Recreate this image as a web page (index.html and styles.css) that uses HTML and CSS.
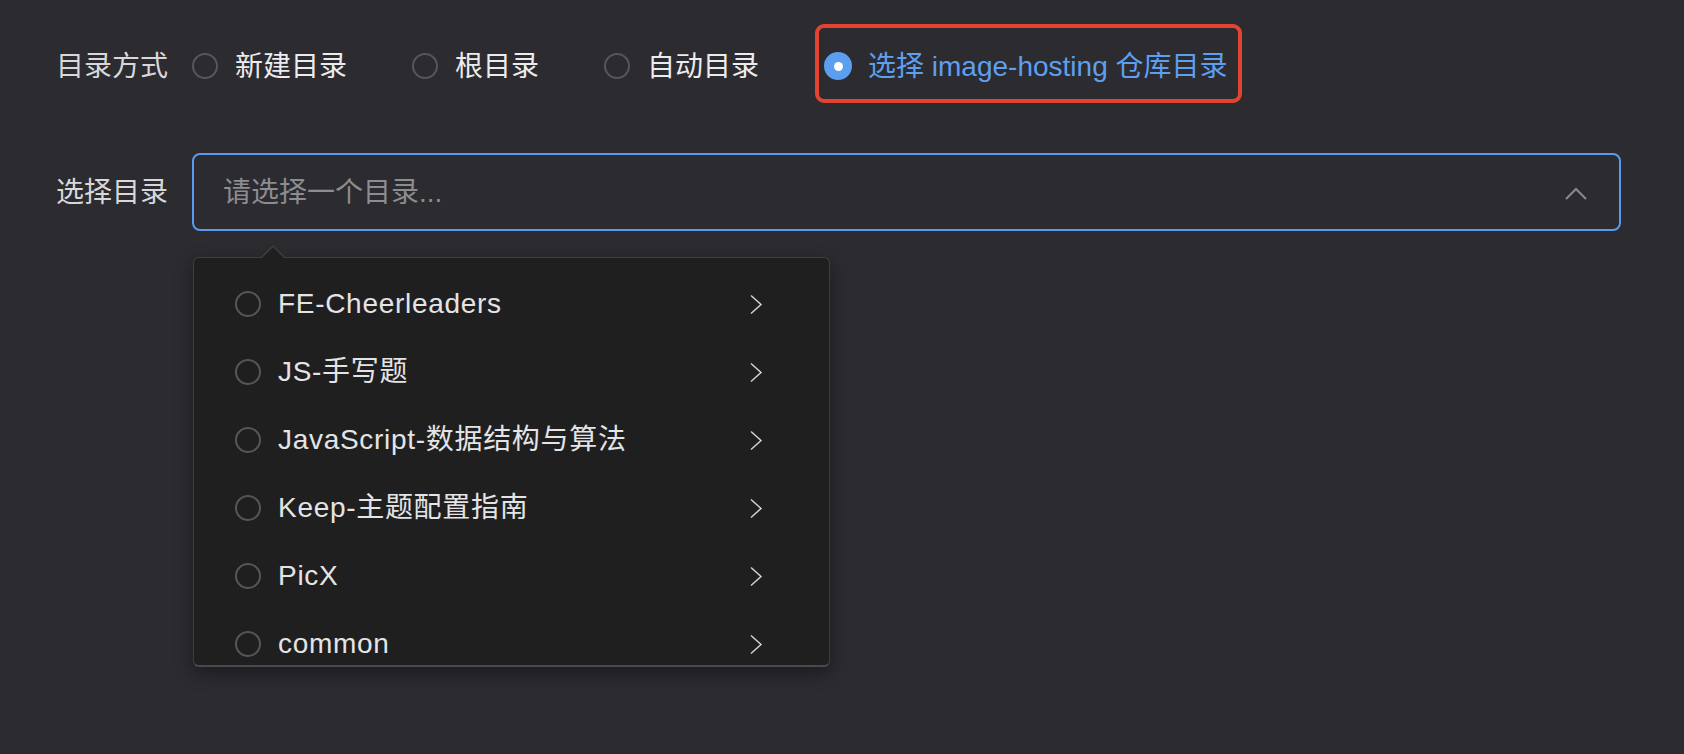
FILE: index.html
```html
<!DOCTYPE html>
<html lang="zh-CN">
<head>
<meta charset="utf-8">
<title>目录方式</title>
<link rel="stylesheet" href="styles.css">
</head>
<body>
<div class="form">
  <div class="row">
    <div class="label">目录方式</div>
    <div class="radios">
      <label class="radio"><span class="dot"></span><span class="rtext">新建目录</span></label>
      <label class="radio"><span class="dot"></span><span class="rtext">根目录</span></label>
      <label class="radio"><span class="dot"></span><span class="rtext">自动目录</span></label>
      <label class="radio checked marked"><span class="dot"></span><span class="rtext">选择 image-hosting 仓库目录</span></label>
    </div>
  </div>
  <div class="row row2">
    <div class="label">选择目录</div>
    <div class="select">
      <div class="input">
        <span class="placeholder">请选择一个目录...</span>
        <svg class="caret" width="22" height="13" viewBox="0 0 22 13"><polyline points="1,12 11,2 21,12" fill="none" stroke="#8a8a8c" stroke-width="2"/></svg>
      </div>
      <div class="dropdown">
        <div class="arrow"></div>
        <div class="panel">
          <ul class="list">
            <li class="item"><span class="dot"></span><span class="itext">FE-Cheerleaders</span><svg class="next" width="14" height="21" viewBox="0 0 14 21"><polyline points="2,1.5 12,10.5 2,19.5" fill="none" stroke="#d2d2d4" stroke-width="1.5"/></svg></li>
            <li class="item"><span class="dot"></span><span class="itext">JS-手写题</span><svg class="next" width="14" height="21" viewBox="0 0 14 21"><polyline points="2,1.5 12,10.5 2,19.5" fill="none" stroke="#d2d2d4" stroke-width="1.5"/></svg></li>
            <li class="item"><span class="dot"></span><span class="itext">JavaScript-数据结构与算法</span><svg class="next" width="14" height="21" viewBox="0 0 14 21"><polyline points="2,1.5 12,10.5 2,19.5" fill="none" stroke="#d2d2d4" stroke-width="1.5"/></svg></li>
            <li class="item"><span class="dot"></span><span class="itext">Keep-主题配置指南</span><svg class="next" width="14" height="21" viewBox="0 0 14 21"><polyline points="2,1.5 12,10.5 2,19.5" fill="none" stroke="#d2d2d4" stroke-width="1.5"/></svg></li>
            <li class="item"><span class="dot"></span><span class="itext">PicX</span><svg class="next" width="14" height="21" viewBox="0 0 14 21"><polyline points="2,1.5 12,10.5 2,19.5" fill="none" stroke="#d2d2d4" stroke-width="1.5"/></svg></li>
            <li class="item"><span class="dot"></span><span class="itext">common</span><svg class="next" width="14" height="21" viewBox="0 0 14 21"><polyline points="2,1.5 12,10.5 2,19.5" fill="none" stroke="#d2d2d4" stroke-width="1.5"/></svg></li>
          </ul>
        </div>
      </div>
    </div>
  </div>
</div>
</body>
</html>
```

FILE: styles.css
```css
html, body {
  margin: 0;
  padding: 0;
  background: #2b2b30;
  height: 100%;
}
body {
  font-family: "Liberation Sans", "Noto Sans CJK SC", sans-serif;
  font-size: 28px;
  color: #e6e6e8;
  overflow: hidden;
}
.form {
  padding: 27px 0 0 56px;
}
.row {
  display: flex;
  align-items: center;
  height: 78px;
}
.row2 {
  margin-top: 48px;
}
.label {
  width: 136px;
  flex: none;
  color: #d8d8da;
  line-height: 30px;
  padding-top: 2px;
}
.radios {
  display: flex;
  align-items: center;
}
.radio {
  display: flex;
  align-items: center;
  margin-right: 65px;
  line-height: 30px;
  position: relative;
}
.dot {
  width: 26px;
  height: 26px;
  box-sizing: border-box;
  border: 2px solid #56565b;
  border-radius: 50%;
  flex: none;
  position: relative;
}
.rtext {
  margin-left: 17px;
  color: #ececee;
  white-space: nowrap;
  padding-top: 2px;
}
.radio.checked .dot {
  width: 28px;
  height: 28px;
  border-color: #5c9ef0;
  background: #5c9ef0;
  margin-right: -1px;
}
.radio.checked .dot::after {
  content: "";
  position: absolute;
  left: 50%;
  top: 50%;
  width: 9px;
  height: 9px;
  margin: -4.5px 0 0 -4.5px;
  border-radius: 50%;
  background: #ffffff;
}
.radio.checked .rtext {
  color: #5e9ff0;
}
.radio.marked::after {
  content: "";
  position: absolute;
  top: -26px;
  bottom: -21px;
  left: -9px;
  right: -15px;
  border: 4px solid #e4432f;
  border-radius: 9px;
  pointer-events: none;
}
.select {
  position: relative;
  width: 1429px;
  height: 78px;
}
.input {
  box-sizing: border-box;
  height: 78px;
  border: 2px solid #5b9aea;
  border-radius: 8px;
  display: flex;
  align-items: center;
  padding: 0 32px 0 29px;
}
.placeholder {
  color: #8c8c91;
  line-height: 30px;
  flex: 1;
  padding-top: 2px;
}
.caret {
  display: block;
  margin-top: 2px;
}
.dropdown {
  position: absolute;
  left: 1px;
  top: 104px;
  width: 637px;
  height: 410px;
  box-shadow: 0 6px 18px rgba(0, 0, 0, 0.35);
  border-radius: 6px;
}
.arrow {
  position: absolute;
  left: 68px;
  top: -12px;
  width: 0;
  height: 0;
  border-left: 12px solid transparent;
  border-right: 12px solid transparent;
  border-bottom: 12px solid #3e3e41;
}
.arrow::after {
  content: "";
  position: absolute;
  left: -11px;
  top: 1.5px;
  border-left: 11px solid transparent;
  border-right: 11px solid transparent;
  border-bottom: 11px solid #1f1f20;
}
.panel {
  box-sizing: border-box;
  height: 410px;
  background: #1f1f20;
  border: 1px solid #3e3e41;
  border-bottom: 2px solid #4a4a4d;
  border-radius: 6px;
  overflow: hidden;
}
.list {
  list-style: none;
  margin: 0;
  padding: 12px 0 0 0;
}
.item {
  height: 68px;
  display: flex;
  align-items: center;
  padding: 0 66px 0 41px;
}
.item .itext {
  margin-left: 17px;
  flex: 1;
  color: #e4e4e6;
  line-height: 30px;
  letter-spacing: 0.7px;
  white-space: nowrap;
}
.next {
  display: block;
}
```
